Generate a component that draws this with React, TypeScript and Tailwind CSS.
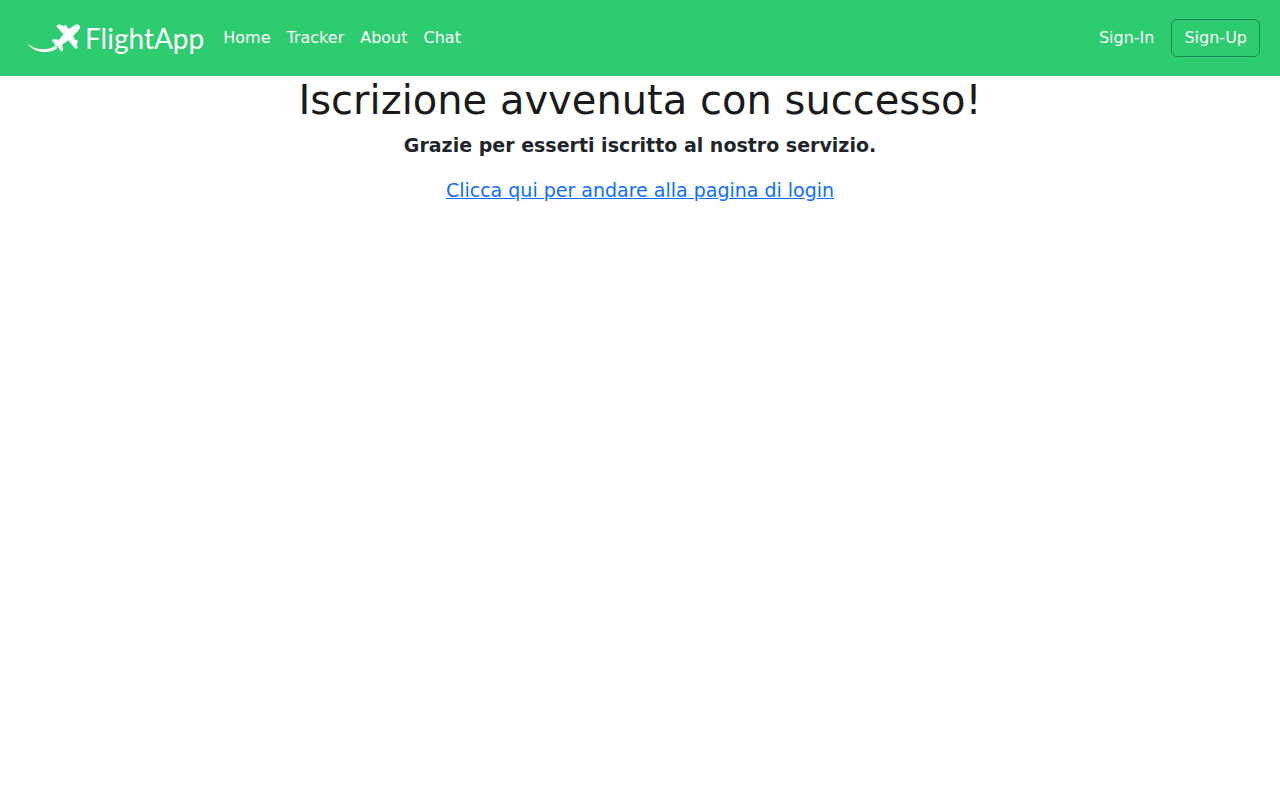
const links = ["Home", "Tracker", "About", "Chat"];

function Logo() {
  return (
    <a href="#" aria-label="FlightApp" className="flex h-11 items-center gap-1 text-white">
      <svg viewBox="22 22 162 90" className="h-[30px] w-[54px]" fill="currentColor" aria-hidden="true">
        <path d="M24 84C39 97 62 102 82 100C92 99 98 96 104 91C110 90 114 94 112 98C104 106 88 110 72 109C50 107 34 98 24 84Z" />
        <path
          stroke="currentColor"
          strokeWidth="2"
          strokeLinejoin="round"
          d="M178 29C182 33 179 41 174 46L159 61L166 74Q172 71 174 77Q175 81 170 84L173 96Q172 101 166 97L146 73L126 87L129 101Q129 105 125 107L114 91L106 88L105 82L97 75Q100 71 105 71L118 74L132 56L111 32Q113 26 121 28L133 32Q136 26 140 30Q142 32 141 36L149 40L163 31C168 27 174 26 178 29Z"
        />
      </svg>
      <span className="font-['Lato',sans-serif] text-[28px] leading-8">FlightApp</span>
    </a>
  );
}

export default function App() {
  return (
    <div className="min-h-screen bg-white font-['DejaVu_Sans',sans-serif] text-base text-[#212529]">
      <nav className="flex items-center bg-[#2ecc71] py-4 pr-5 pl-[27px] text-white">
        <Logo />
        <ul className="ml-[11px] flex flex-1">
          {links.map((label) => (
            <li key={label}>
              <a href="#" className="block px-2 py-2 leading-6">{label}</a>
            </li>
          ))}
        </ul>
        <div className="flex items-center gap-1">
          <a href="#" className="rounded-md border border-transparent px-3 py-1.5 leading-6">Sign-In</a>
          <a href="#" className="rounded-md border border-[#198754] px-3 py-1.5 leading-6">Sign-Up</a>
        </div>
      </nav>
      <main className="text-center">
        <h1 className="mb-[7px] text-[40px] leading-12 text-[#1a1a1a]">Iscrizione avvenuta con successo!</h1>
        <p className="mb-4 text-[19px] leading-[29px] font-bold">Grazie per esserti iscritto al nostro servizio.</p>
        <p className="text-[19px] leading-[29px]">
          <a href="#" className="text-[#0d6efd] underline">Clicca qui per andare alla pagina di login</a>
        </p>
      </main>
    </div>
  );
}
